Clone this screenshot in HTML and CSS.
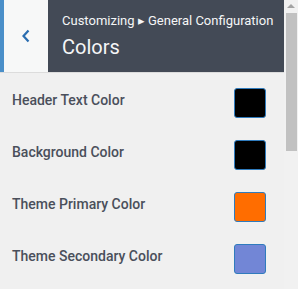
FILE: index.html
```html
<!DOCTYPE html>
<html lang="en">
  <head>
    <meta charset="UTF-8" />
    <meta name="viewport" content="width=device-width, initial-scale=1.0" />
    <title>Colors</title>
    <link rel="stylesheet" href="styles.css">
  </head>
  <body>
    <div class="page">
      <div class="main">
        <header class="header">
          <a href="#" class="back-button" aria-label="Back">
            <svg width="10" height="14" viewBox="0 0 10 14">
              <path d="M7.5 1.5 L2.5 7 L7.5 12.5" fill="none" stroke="#2a6db0" stroke-width="2.2" />
            </svg>
          </a>
          <div class="title-block">
            <div class="breadcrumb">Customizing &#9656; General Configuration</div>
            <h1>Colors</h1>
          </div>
        </header>

        <div class="settings">
          <div class="setting-row">
            <span class="setting-label">Header Text Color</span>
            <span class="swatch" style="background-color: #000000"></span>
          </div>
          <div class="setting-row">
            <span class="setting-label">Background Color</span>
            <span class="swatch" style="background-color: #000000"></span>
          </div>
          <div class="setting-row">
            <span class="setting-label">Theme Primary Color</span>
            <span class="swatch" style="background-color: #ff6d00"></span>
          </div>
          <div class="setting-row">
            <span class="setting-label">Theme Secondary Color</span>
            <span class="swatch" style="background-color: #7286d6"></span>
          </div>
        </div>
      </div>

      <div class="scrollbar">
        <div class="scroll-arrow"></div>
        <div class="scroll-thumb"></div>
      </div>
    </div>
  </body>
</html>
```

FILE: styles.css
```css
html, body {
  margin: 0;
  padding: 0;
  height: 100%;
}
body {
  font-family: Roboto, "Liberation Sans", sans-serif;
  background-color: #f0f0f0;
  overflow: hidden;
}
.page {
  display: flex;
  height: 289px;
}
.main {
  flex: 1;
  min-width: 0;
}
.header {
  display: flex;
  height: 72px;
  border-bottom: 1px solid #dcdcdc;
}
.back-button {
  width: 44px;
  flex-shrink: 0;
  border-left: 4px solid #4a8fc9;
  background-color: #f7f8f8;
  display: flex;
  align-items: center;
  justify-content: center;
}
.title-block {
  flex: 1;
  background-color: #434a56;
  color: #f5f6f7;
  padding: 13px 0 0 14px;
}
.breadcrumb {
  font-size: 13px;
  line-height: 16px;
  white-space: nowrap;
}
h1 {
  margin: 6px 0 0;
  font-size: 20px;
  font-weight: normal;
  line-height: 24px;
}
.settings {
  padding: 15px 18px 0 12px;
}
.setting-row {
  display: flex;
  align-items: center;
  justify-content: space-between;
  height: 30px;
  margin-bottom: 22px;
}
.setting-label {
  font-size: 14px;
  font-weight: 500;
  color: #4a4f5b;
  padding-bottom: 7px;
}
.swatch {
  width: 30px;
  height: 28px;
  border: 1px solid #2f7bbd;
  border-radius: 3px;
}
.scrollbar {
  width: 14px;
  flex-shrink: 0;
  background-color: #f1f1f1;
  position: relative;
}
.scroll-arrow {
  position: absolute;
  top: 4px;
  left: 3px;
  width: 0;
  height: 0;
  border-left: 4px solid transparent;
  border-right: 4px solid transparent;
  border-bottom: 4px solid #a3a3a3;
}
.scroll-thumb {
  position: absolute;
  top: 13px;
  left: 2px;
  width: 11px;
  height: 138px;
  background-color: #c1c1c1;
}
```
